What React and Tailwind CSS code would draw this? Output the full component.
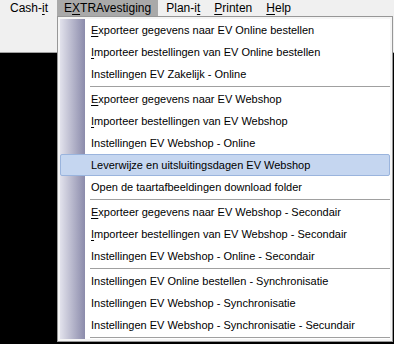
import React from "react";

const menuBar = [
  { pre: "Cash-", key: "i", post: "t" },
  { pre: "E", key: "X", post: "TRAvestiging", open: true },
  { pre: "Plan-i", key: "t", post: "" },
  { pre: "", key: "P", post: "rinten" },
  { pre: "", key: "H", post: "elp" },
];

// sep: separator after the item; key: underline first letter
const items = [
  { label: "Exporteer gegevens naar EV Online bestellen", key: true },
  { label: "Importeer bestellingen van EV Online bestellen", key: true },
  { label: "Instellingen EV Zakelijk - Online", sep: true },
  { label: "Exporteer gegevens naar EV Webshop", key: true },
  { label: "Importeer bestellingen van EV Webshop", key: true },
  { label: "Instellingen EV Webshop - Online" },
  { label: "Leverwijze en uitsluitingsdagen EV Webshop", active: true },
  { label: "Open de taartafbeeldingen download folder", sep: true },
  { label: "Exporteer gegevens naar EV Webshop - Secondair", key: true },
  { label: "Importeer bestellingen van EV Webshop - Secondair", key: true },
  { label: "Instellingen EV Webshop - Online - Secondair", sep: true },
  { label: "Instellingen EV Online bestellen - Synchronisatie" },
  { label: "Instellingen EV Webshop - Synchronisatie" },
  { label: "Instellingen EV Webshop - Synchronisatie - Secundair", sep: true },
];

function Separator() {
  return (
    <div className="h-[3px] pl-[30px] pt-[1px]">
      <div className="h-px bg-[#a0a0a0]" />
      <div className="h-px bg-white" />
    </div>
  );
}

function MenuItem({ item }) {
  const text = item.key ? (
    <>
      <span className="underline underline-offset-2">{item.label[0]}</span>
      {item.label.slice(1)}
    </>
  ) : (
    item.label
  );
  if (item.active) {
    return (
      <div className="h-[22px] flex items-center pl-[30px] rounded-[2px] border border-[#9ab4dd] bg-[#c5d6f0] text-black">
        {text}
      </div>
    );
  }
  return <div className="h-[22px] flex items-center pl-[31px] text-black">{text}</div>;
}

export default function App() {
  return (
    <div className="relative w-[394px] h-[344px] overflow-hidden bg-black text-[12px] leading-none font-['Liberation_Sans',Arial,sans-serif]">
      {/* menu bar */}
      <div className="h-[16px] bg-[#f0f0f0] flex pl-[3px] text-black">
        {menuBar.map((m, i) => (
          <div
            key={i}
            className={
              m.open
                ? "h-full flex items-center px-[7px] bg-[#a9a9a9] ml-[2px] mr-px"
                : "h-full flex items-center px-[7px]"
            }
          >
            {m.pre}
            <span className="underline underline-offset-2">{m.key}</span>
            {m.post}
          </div>
        ))}
      </div>
      {/* toolbar strip */}
      <div className="h-[37px] bg-[#f0f0f0] border-b border-[#a0a0a0]" />

      {/* dropdown */}
      <div className="absolute left-[57px] top-[16px] w-[336px] border border-[#979797] bg-[#f5f5f5] p-[2px] text-[11px]">
        <div className="bg-[linear-gradient(to_right,#e2e2ec_0px,#8b8bab_25px,#ffffff_25px)]">
          {items.map((it, i) => (
            <React.Fragment key={i}>
              <MenuItem item={it} />
              {it.sep && <Separator />}
            </React.Fragment>
          ))}
        </div>
      </div>
    </div>
  );
}
